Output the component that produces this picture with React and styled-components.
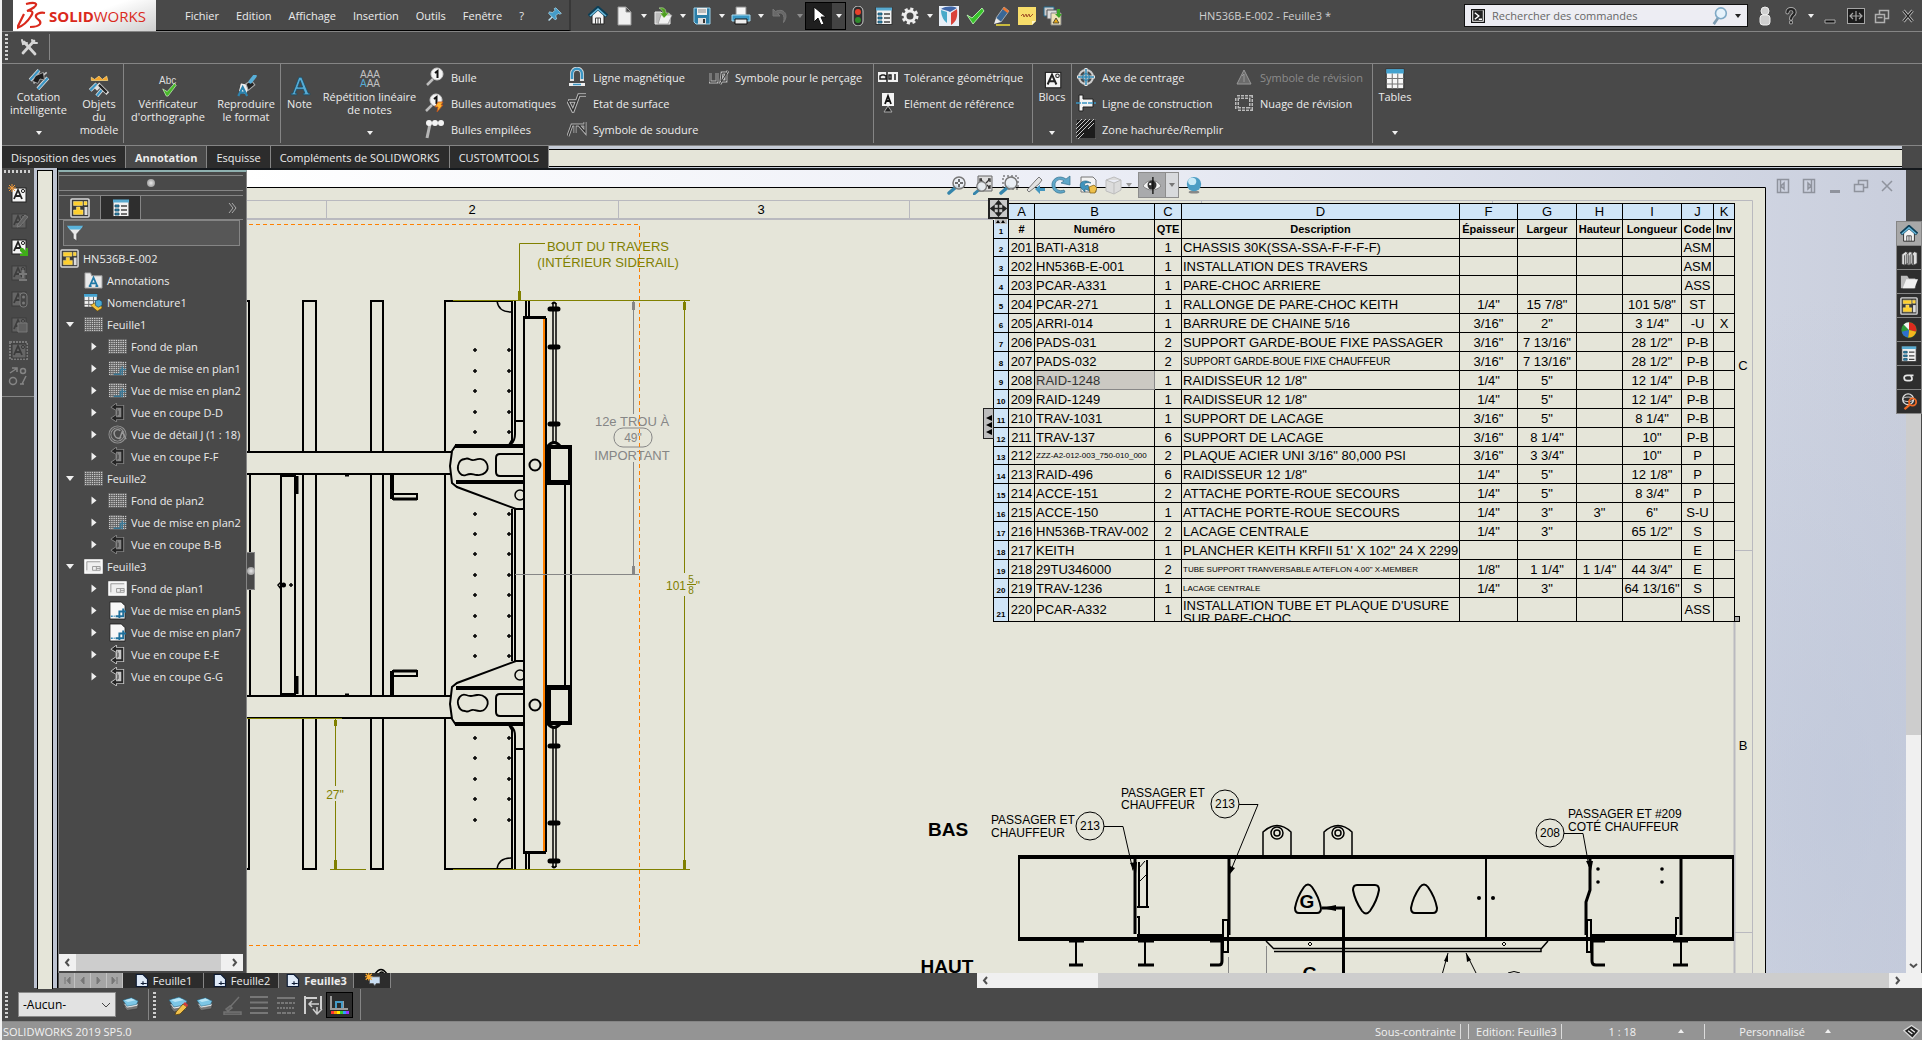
import React from 'react'
import styled, { createGlobalStyle } from 'styled-components'

const GlobalStyle = createGlobalStyle`
  * { box-sizing: border-box; }
  body { margin: 0; overflow: hidden; background: #494949; }
  button, input, select { font: inherit; color: inherit; margin: 0; padding: 0; }
  button { border: 0; background: none; cursor: pointer; }
`

/* ---------- icons, all on a 20 x 20 grid ---------- */

const sheetGrid = (
  <g fill="#cfcfcf">
    {Array.from({ length: 56 }, (_, i) => (
      <rect key={i} x={1 + (i % 8) * 2.4} y={3 + Math.floor(i / 8) * 2.1} width="1.4" height="1.2" />
    ))}
  </g>
)

const house = (
  <g>
    <path d="M4 9v9h12V9l-6-6z" fill="#f4f4f4" stroke="#222" />
    <path d="M1 10l9-8 9 8" fill="none" stroke="#0d3f57" strokeWidth="4" />
    <path d="M2 10l8-7 8 7" fill="none" stroke="#69b9dc" strokeWidth="1.6" />
    <path d="M7.500 18v-6h5v6M10 12v6" fill="none" stroke="#444" />
  </g>
)

const drawingDoc = (
  <g>
    <rect x="1" y="1" width="18" height="18" rx="1" fill="#3a3a3a" stroke="#d8d8d8" strokeWidth="1.600" />
    <path d="M3.500 3.500h9v4h-9zM14 3.500h3v3.500h-3zM6.500 9h3.500v3h3v4.500H3.500V12h3z" fill="#ffd02e" stroke="#fff0a0" strokeWidth=".5" />
    <path d="M14.500 9h3v8h-3z" fill="#ddd" />
  </g>
)

const optionsList = (
  <g>
    <rect x="2" y="1.500" width="16" height="17" fill="#f2f2f2" stroke="#333" />
    <path d="M2 1.500h16v3H2z" fill="#58aad0" />
    <path d="M4 7h4v2H4zM4 11h4v2H4zM4 15h4v2H4z" fill="#2b89b5" stroke="#174a63" strokeWidth=".8" />
    <path d="M10 8h6M10 12h6M10 16h6" stroke="#444" strokeWidth="1.300" />
  </g>
)

const greyView = (
  <g>
    <path d="M2 2h12l4 4v12H2z" fill="#606060" />
    {sheetGrid}
    <path d="M6 16h7v-5h6M15 8v9" stroke="#3b7896" strokeWidth="1.500" fill="none" />
  </g>
)

const whiteView = (
  <g>
    <path d="M2 1h12l4 4v14H2z" fill="#f7f7f7" stroke="#222" />
    <path d="M3 16h4" stroke="#3389b7" strokeWidth="1.500" strokeDasharray="2 1" />
    <path d="M8 16h8v-8M12 18v-7h7" stroke="#1e6f9b" strokeWidth="2" fill="none" />
  </g>
)

const section = (light) => (
  <g fill="none">
    <path d="M8 4h7v12H8M10 8h5M10 12h5M10 8v4" stroke={light} strokeWidth="4" />
    <path d="M9 0L3 4.500 9 8zM9 12l-6 4 6 4z" fill="#222" stroke={light} />
    <path d="M7 4h8v12H7" stroke="#262626" strokeWidth="2" />
    <path d="M10.500 8v4.500" stroke="#262626" />
  </g>
)

const layers = (
  <g stroke="#205b77" strokeWidth=".6">
    <path d="M2 12l4 5 12-2 1-3z" fill="#777" stroke="#333" />
    <path d="M2 9l4 5 12-2 1-3z" fill="#eee" stroke="#555" />
    <path d="M1 5l10-3 8 4-2 4-11 2z" fill="#7cc6e6" />
    <path d="M3 5l8-2 5 2-9 2z" fill="#b9e5f6" stroke="none" />
  </g>
)

const blockA = (bg, fg) => (
  <g>
    <rect x="4" y="4" width="14" height="14" fill={bg} stroke={fg} />
    <path d="M6 15l4-9 4 9M7.500 12h5" fill="none" stroke={fg} strokeWidth="1.800" />
    <circle cx="15" cy="7" r="1.600" fill="none" stroke={fg} />
  </g>
)

const lens = (
  <g>
    <path d="M9 12l-7 6" stroke="#3585ab" strokeWidth="3.500" strokeLinecap="round" />
    <circle cx="12" cy="8" r="6" fill="#e9eef3" fillOpacity=".8" stroke="#777" strokeWidth="1.500" />
  </g>
)

const glyphs = {
  wrench: (
    <g stroke="#d5d5d5" strokeWidth="2.800" strokeLinecap="round" fill="none">
      <path d="M5 5l11 12M15 4L4 16" />
      <path d="M3 3l1 4 4-1M13 3l1 3 4 0" strokeWidth="2" />
    </g>
  ),
  pin: (
    <g fill="#459cc8" stroke="#b9dff0" strokeWidth=".8">
      <path d="M8 11l-6 6" strokeWidth="1.800" />
      <path d="M11 1l7 7-2 1-2-1-3 3 1 4-2 1-8-8 1-2 4 1 3-3-1-2z" />
    </g>
  ),
  home: house,
  doc: <path d="M4 1h8l5 5v13H4zM12 1v5h5" fill="#f0f0f0" stroke="#999" />,
  open: (
    <g>
      <path d="M2 6h6l2 2h7v10H2z" fill="#bdbdbd" stroke="#eee" />
      <path d="M5 18L8 9h11l-4 9z" fill="#f1f1f1" stroke="#888" strokeWidth=".6" />
      <path d="M6 2c5-1 7 1 7 5h3l-5 5-4-5h3c0-2-1-3-4-5z" fill="#4f9f22" stroke="#d7f2bb" strokeWidth=".5" />
    </g>
  ),
  save: (
    <g>
      <path d="M2 2h16v16H4l-2-2z" fill="#2b7ea8" stroke="#9bd0e8" />
      <path d="M5 2h10v7H5z" fill="#efefef" />
      <path d="M6 4h8M6 6h8" stroke="#888" />
      <path d="M6 12h8v6H6z" fill="#ddd" />
      <path d="M11 13h2v4h-2z" fill="#333" />
    </g>
  ),
  print: (
    <g>
      <path d="M5 1h10v8H5z" fill="#f6f6f6" stroke="#888" />
      <path d="M1 9h18v6H1z" fill="#3a98c5" stroke="#a6d8ed" />
      <path d="M4 13h12v5H4z" fill="#eee" stroke="#111" />
    </g>
  ),
  undo: <path d="M3 3v7h7L7.500 7.500c4-2 8 1 6 9 6-8 0-15-8-11z" fill="#686868" stroke="#777" />,
  cursor: <path d="M5 1v15l4-4 3 7 3-1-3-7h5z" fill="#fff" stroke="#111" />,
  traffic: (
    <g>
      <rect x="5" y="0" width="10" height="20" rx="5" fill="#2c2c2c" stroke="#c9c9c9" />
      <circle cx="10" cy="6" r="3" fill="#e8402a" />
      <circle cx="10" cy="14" r="3" fill="#2f8a2c" />
    </g>
  ),
  options: optionsList,
  gear: (
    <g>
      <circle cx="10" cy="10" r="7" fill="none" stroke="#ededed" strokeWidth="3" strokeDasharray="3 2.500" />
      <circle cx="10" cy="10" r="5" fill="none" stroke="#ededed" strokeWidth="3" />
    </g>
  ),
  shield: (
    <g>
      <path d="M0 0h20v20H0z" fill="#e8eef6" />
      <path d="M2 4l6 2v11C4 14 2 9 2 4z" fill="#49a9c9" />
      <path d="M18 3l-6 4v12c5-3 7-8 6-16z" fill="#d9433b" />
      <path d="M2 3c5-3 11-3 16-1l-7 4-2-1z" fill="#3f66a8" />
    </g>
  ),
  check: <path d="M2 9l5 3L17 2l2 3L8 18z" fill="#39c32b" stroke="#c8ffc0" strokeWidth=".8" />,
  pencil: (
    <g>
      <path d="M13 1l5 4-8 11-5-4z" fill="#3a6796" stroke="#ddd" strokeWidth=".6" />
      <path d="M13 1l5 4-1.500 2-5-4z" fill="#f07830" />
      <path d="M5 12l5 4-7 2z" fill="#ececec" />
      <path d="M5 19h14" stroke="#f5e13b" strokeWidth="1.500" />
    </g>
  ),
  note: (
    <g>
      <path d="M1 1h18v14l-4 4H1z" fill="#f7dd6a" />
      <path d="M19 15h-4v4z" fill="#fff7c8" />
      <path d="M4 10l2-2 1 3 2-3 1 3 2-3 1 3 3-3" fill="none" stroke="#a3542a" />
    </g>
  ),
  tasks: (
    <g>
      <path d="M1 1h10v9H1z" fill="#ccc" stroke="#246b8f" />
      <path d="M4 4h10v9H4z" fill="#ddd" stroke="#555" />
      <path d="M8 7h10v12H8z" fill="#efe3b8" stroke="#888" />
      <path d="M10 17l3-5 3 5z" fill="#e6a817" stroke="#333" strokeWidth=".8" />
      <path d="M14 3h3v5h2l-3 4-4-4h2z" fill="#3da42a" />
    </g>
  ),
  user: (
    <g fill="#cfcfcf" stroke="#eee">
      <rect x="6" y="1" width="8" height="8" rx="4" />
      <rect x="5" y="9" width="10" height="10" rx="3" />
    </g>
  ),
  help: (
    <g fill="none" strokeLinecap="round">
      <path d="M6 6c0-5 8-5 8 0 0 3-4 3-4 7M10 17v.2" stroke="#aaa" strokeWidth="4.500" />
      <path d="M6 6c0-5 8-5 8 0 0 3-4 3-4 7M10 17v.2" stroke="#222" strokeWidth="2.500" />
    </g>
  ),
  minimize: <path d="M5 14h10v3H5z" fill="#111" stroke="#aaa" />,
  span: (
    <g fill="none" stroke="#a5a5a5">
      <rect x="1.500" y="2.500" width="17" height="15" fill="#1b1b1b" />
      <path d="M10 5v10M4 10h12M7 7l-3 3 3 3M13 7l3 3-3 3" strokeWidth="1.200" />
    </g>
  ),
  restore: (
    <g fill="none" stroke="#b0b0b0" strokeWidth="1.500">
      <path d="M3.500 8.500h9v8h-9zM7.500 8V4.500h9v8H13" />
      <path d="M5.500 11.500h5" />
    </g>
  ),
  close: (
    <g fill="none">
      <path d="M5 4l10 12M15 4L5 16" stroke="#b5b5b5" strokeWidth="3.500" />
      <path d="M5 4l10 12M15 4L5 16" stroke="#1d1d1d" strokeWidth="1.500" />
    </g>
  ),
  dimension: (
    <g>
      <path d="M2 11l8-9M9 19l9-10" stroke="#ddd" strokeWidth="3.500" />
      <path d="M2 11l8-9M9 19l9-10" stroke="#3a95c4" strokeWidth="2" />
      <path d="M5 14l12-10" stroke="#c9c9c9" strokeWidth="1.500" />
      <path d="M7 7l7-3 1 7-4-1-2 4-5-2z" fill="#1c1c1c" stroke="#aaa" strokeWidth=".8" />
    </g>
  ),
  modelItems: (
    <g>
      <path d="M2 14l6-6M8 19l5-6" stroke="#ddd" strokeWidth="3.500" />
      <path d="M2 14l6-6M8 19l5-6" stroke="#3a95c4" strokeWidth="2" />
      <path d="M3 2l3 2 4-3 3 3 4-3 1 4H3z" fill="#f6a52a" stroke="#ffe493" strokeWidth=".6" />
      <path d="M9 8l9 9M7 13l4-4" stroke="#ddd" strokeWidth="3.500" />
      <path d="M10 9l7 7" stroke="#222" strokeWidth="2" />
    </g>
  ),
  bigA: <path d="M2 18h5v-1.500H5.600L7 13h6l1.400 3.500H13V18h6v-1.500h-1.500L11.500 2H9L3.500 16.500H2zM8 11l2.200-6 2.200 6z" fill="#56acd6" stroke="#174c66" strokeWidth=".7" />,
  spelling: <path d="M3 11l5 3 8-9 2 2-9 12h-2z" fill="#49b92b" stroke="#dcffd0" strokeWidth=".7" />,
  format: (
    <g>
      <path d="M5 7l10 2-5 9-7-3z" fill="#eee" stroke="#444" />
      <path d="M10 8l5-3 3 4-6 5z" fill="#222" stroke="#aaa" />
      <path d="M14 6l4-5" stroke="#58b0d9" strokeWidth="3.500" strokeLinecap="round" />
      <path d="M3 19l4-8 4 8M5 16h4" fill="none" stroke="#2c83ae" strokeWidth="2" />
    </g>
  ),
  balloon: (
    <g>
      <circle cx="12" cy="7" r="6" fill="#f4f4f4" stroke="#ccc" />
      <path d="M10 6l2.500-2v7" fill="none" stroke="#111" strokeWidth="2" />
      <path d="M8 12l-6 6" stroke="#bdbdbd" strokeWidth="2.500" />
    </g>
  ),
  autoBalloon: (
    <g>
      <circle cx="11" cy="7" r="6" fill="#f4f4f4" stroke="#ccc" />
      <path d="M9 6l2.500-2v7" fill="none" stroke="#111" strokeWidth="2" />
      <path d="M7 12l-6 6" stroke="#bdbdbd" strokeWidth="2.500" />
      <path d="M13 9h5l-2 3h2l-6 7 1-5h-3z" fill="#ffb52e" stroke="#c3511b" strokeWidth=".8" />
    </g>
  ),
  stacked: (
    <g>
      <path d="M5 5L2 19" stroke="#b5b5b5" strokeWidth="3" />
      <g fill="#f4f4f4"><circle cx="4" cy="4" r="3" /><circle cx="10" cy="4" r="3" /><circle cx="16" cy="4" r="3" /></g>
    </g>
  ),
  magnet: (
    <g fill="none">
      <path d="M5 14V7c0-7 10-7 10 0v7" stroke="#dedede" strokeWidth="4" />
      <path d="M5 12V7c0-7 10-7 10 0v5" stroke="#3a95c4" strokeWidth="2.500" />
      <path d="M2 17.500h16" stroke="#eee" strokeWidth="3" />
      <path d="M6 17.500h8" stroke="#3a95c4" strokeWidth="1.500" />
    </g>
  ),
  surface: (
    <g fill="none">
      <path d="M1 8h9M1 8l5 10L12 2h7" stroke="#b9b9b9" strokeWidth="3.500" />
      <path d="M2 8h7M1 8l5 10L12 2h7" stroke="#303030" strokeWidth="1.500" />
    </g>
  ),
  weld: (
    <g fill="none">
      <path d="M1 17L5 6h13M8 6v8M12 6l6 7V3" stroke="#b9b9b9" strokeWidth="3" />
      <path d="M1 17L5 6h13M8 6v8M12 6l6 7V3" stroke="#2d2d2d" strokeWidth="1.200" />
    </g>
  ),
  hole: (
    <g fill="none">
      <path d="M1 6v9h7V6M13 6h4v8h-5zM11 17l8-13" stroke="#bbb" strokeWidth="2.800" />
      <path d="M1 6v9h7V6M13 6h4v8h-5zM11 17l8-13" stroke="#333" />
    </g>
  ),
  tolerance: (
    <g>
      <path d="M0 5h20v10H0z" fill="#f1f1f1" />
      <path d="M9 5v10M2 12v-3l2-1h2l2 1v3zM11 8h2v4h-2zM17 7v6" stroke="#222" fill="none" strokeWidth="1.500" />
    </g>
  ),
  datum: (
    <g>
      <rect x="4" y="0" width="12" height="13" fill="#f4f4f4" />
      <path d="M7 11l3-8 3 8M8 8h4" fill="none" stroke="#111" strokeWidth="1.800" />
      <path d="M10 13l4 6H6z" fill="#222" stroke="#aaa" />
    </g>
  ),
  block: blockA('#f4f4f4', '#222'),
  blockDim: <g opacity=".5">{blockA('#7a7a7a', '#333')}</g>,
  blockFrame: <g opacity=".6"><rect x="2" y="2" width="17" height="17" fill="none" stroke="#999" strokeWidth="2" strokeDasharray="2 1" />{blockA('#7a7a7a', '#333')}</g>,
  blockTraffic: (
    <g opacity=".6">
      {blockA('#7a7a7a', '#333')}
      <rect x="12" y="5" width="7" height="14" rx="3" fill="#444" stroke="#999" />
      <circle cx="15.500" cy="9" r="1.500" fill="#999" /><circle cx="15.500" cy="15" r="1.500" fill="#999" />
    </g>
  ),
  blockNew: <g>{blockA('#f4f4f4', '#222')}<path d="M4 0v8M0 4h8M1 1l6 6M7 1L1 7" stroke="#f19b3c" /></g>,
  blockInsert: <g>{blockA('#f4f4f4', '#222')}<path d="M12 12l3 0 3 3v-3h2v8h-8v-2h3l-3-3z" fill="#3fae18" /></g>,
  blockEdit: <g opacity=".5">{blockA('#7a7a7a', '#333')}<path d="M10 14l7-9 3 2-8 9-3 1z" fill="#777" stroke="#aaa" /></g>,
  blockAdd: <g opacity=".5">{blockA('#7a7a7a', '#333')}<path d="M11 12h8M15 8v8M11 18h8" stroke="#aaa" strokeWidth="2" /></g>,
  blockSave: <g opacity=".5">{blockA('#7a7a7a', '#333')}<path d="M10 9h9v9h-9z" fill="#777" stroke="#aaa" /></g>,
  belt: (
    <g fill="none" stroke="#858585" strokeWidth="1.500">
      <circle cx="5" cy="15" r="3.500" /><circle cx="15" cy="5" r="2.500" />
      <path d="M2 7l6-4M4 2h5v4M18 10l-4 8M12 18h4" />
    </g>
  ),
  centerMark: (
    <g fill="none">
      <circle cx="10" cy="10" r="7" stroke="#ccc" strokeWidth="2" />
      <path d="M10 1v18M1 10h18" stroke="#e5e5e5" strokeWidth="3" />
      <path d="M10 2v16M2 10h16" stroke="#2c86b3" strokeWidth="1.500" />
      <circle cx="10" cy="10" r="3.500" stroke="#2c86b3" />
    </g>
  ),
  centerLine: (
    <g>
      <path d="M3 2h4v4h10v8H7v4H3z" fill="#f2f2f2" stroke="#222" />
      <path d="M0 10h20" stroke="#3a95c4" strokeWidth="1.500" strokeDasharray="5 1" />
    </g>
  ),
  hatch: (
    <g>
      <path d="M0 0h20v20H0z" fill="#1c1c1c" stroke="#777" />
      <path d="M0 18L18 0M0 14L14 0M0 10L10 0M0 6l6-6M2 20l6-6M12 10l6-6" stroke="#c8c8c8" />
    </g>
  ),
  revSymbol: <path d="M10 3l7 14H3zM10 7v8M8 9l2-2" fill="#6b6b6b" stroke="#999" />,
  revCloud: (
    <g fill="none">
      <rect x="3" y="4" width="14" height="12" stroke="#bbb" strokeWidth="4" strokeDasharray="3 1" />
      <rect x="3" y="4" width="14" height="12" stroke="#444" />
    </g>
  ),
  table: (
    <g>
      <path d="M2 1h16v18H2z" fill="#f7f7f7" stroke="#333" />
      <path d="M2 1h16v4H2z" fill="#43a2cf" />
      <path d="M2 9.500h16M2 14.500h16M7.500 5v14M12.500 5v14" stroke="#777" />
    </g>
  ),
  drawing: drawingDoc,
  annotations: (
    <g>
      <path d="M1 2h6l1 3h11v13H1z" fill="#e9e9e9" stroke="#999" />
      <path d="M6 16l4-9 4 9M7.500 13h5M5 16h3M12 16h3" fill="none" stroke="#2078a5" strokeWidth="1.800" />
    </g>
  ),
  bom: (
    <g>
      <path d="M0 1h14v14H0z" fill="#f2f2f2" stroke="#333" />
      <path d="M0 1h14v3H0z" fill="#43a2cf" />
      <path d="M0 8h14M0 12h14M5 4v11M10 4v11" stroke="#666" />
      <path d="M7 13l5-3 2 2 4-1 1 5-5 3z" fill="#f4c33a" stroke="#6b4d06" strokeWidth=".7" />
      <path d="M12 8l4-1 3 2v4l-4 2-3-2z" fill="#4ba9d4" stroke="#174a63" strokeWidth=".7" />
    </g>
  ),
  sheetDim: <g><path d="M0 2h20v16H0z" fill="#5c5c5c" />{sheetGrid}</g>,
  sheet: (
    <g>
      <path d="M1 3h18v14H1z" fill="#efefef" stroke="#fff" strokeWidth="1.500" />
      <path d="M3 14V5h14M9 14v-4h8v4H9M13 10v4M13 12h4" stroke="#999" fill="none" />
    </g>
  ),
  viewDim: greyView,
  view: whiteView,
  sectionDim: section('#858585'),
  section: section('#c5c5c5'),
  detail: (
    <g fill="none">
      <circle cx="10" cy="10" r="8" stroke="#909090" strokeWidth="3" />
      <circle cx="10" cy="10" r="8" stroke="#444" />
      <path d="M13 6c-4-3-8 1-6 5s5 3 7 2M12 15l3-8 4 8" stroke="#999" strokeWidth="1.500" />
    </g>
  ),
  funnel: (
    <g>
      <path d="M1 3h18l-7 8v8l-4-3v-5z" fill="#e9e9e9" stroke="#444" strokeWidth=".8" />
      <path d="M1 2h18l-3 4H4z" fill="#5ab3dc" />
    </g>
  ),
  library: (
    <g fill="#dedede" stroke="#333" strokeWidth=".8">
      <path d="M2 6l4-3 3 1v12l-4 2-3-1zM7 6l4-3 3 1v12l-4 2-3-1zM12 6l4-3 3 1v12l-4 2-3-1z" />
      <path d="M5 7v11M10 7v11M15 7v11" />
    </g>
  ),
  folder: (
    <g>
      <path d="M1 3h7l2 3h7v11H1z" fill="#bbb" />
      <path d="M3 17L7 7h13l-4 10z" fill="#f1f1f1" />
    </g>
  ),
  ball: (
    <g>
      <circle cx="10" cy="10" r="8.500" fill="#2f9a3a" />
      <path d="M10 10L4 4a8.500 8.500 0 0 1 6-2.500z" fill="#f2f2f2" />
      <path d="M10 10V1.500A8.500 8.500 0 0 1 18 12z" fill="#dd2a1e" />
      <path d="M10 10l8 2a8.500 8.500 0 0 1-9 6.400z" fill="#f4b51d" />
      <path d="M10 10L9 18.400A8.500 8.500 0 0 1 2 12z" fill="#2f6fd0" />
    </g>
  ),
  forum: <path d="M15 7H8c-5 0-4 6 0 6h3c3 0 3-3 1-5" fill="none" stroke="#e5e5e5" strokeWidth="2" />,
  search3d: (
    <g fill="none">
      <circle cx="9" cy="7" r="6" stroke="#ddd" strokeWidth="1.500" />
      <ellipse cx="9" cy="7" rx="6" ry="2.500" stroke="#ddd" />
      <circle cx="14" cy="10" r="4" stroke="#ef6a25" strokeWidth="2" />
      <path d="M11 13l-6 5" stroke="#ef6a25" strokeWidth="2.500" />
    </g>
  ),
  zoomFit: <g>{lens}<path d="M12 4v8M8 8h8" stroke="#444" strokeDasharray="3 2" strokeWidth="1.500" /></g>,
  zoomSheet: (
    <g>
      <path d="M5 1h14v15H5z" fill="#ddd" stroke="#666" />
      <path d="M9 4H7v3M15 4h2v3M17 10v3h-2M8 5l3 3M16 5l-3 3M17 13l-3-3" stroke="#333" fill="none" strokeWidth="1.300" />
      <g transform="translate(-1 5) scale(.8)">{lens}</g>
    </g>
  ),
  zoomArea: <g><path d="M4 1h15v13H4z" fill="none" stroke="#444" strokeDasharray="2 2" />{lens}</g>,
  previous: (
    <g>
      <path d="M2 15l9-10 3-3 3 3-3 4-10 8z" fill="#e2e2e2" stroke="#777" />
      <path d="M10 14l5-4v3h5v3h-5v3z" fill="#4497bf" />
    </g>
  ),
  rotate: <path d="M15 4C8-1 0 4 1 11c1 6 7 9 13 6l-1-2c-5 2-9-1-9-5 0-5 5-7 9-4l-3 2 9 2V1z" fill="#5fa7c9" stroke="#39738e" strokeWidth=".7" />,
  rotate3d: (
    <g>
      <path d="M4 2h12l3 3v12H4z" fill="#f3f3f3" stroke="#777" />
      <path d="M14 8c-7-5-13 0-10 5l4 4v-3l5 2-2-6-3 1c-2-3 2-4 6-3z" fill="#3f93bd" stroke="#1f5c7a" strokeWidth=".6" />
      <path d="M12 12l5-2 3 3-2 5-5 0z" fill="#eec04a" stroke="#7c5a10" strokeWidth=".7" />
    </g>
  ),
  cube: <path d="M3 5l8-3 7 3v10l-7 4-8-3zM3 5l8 3 7-3M11 8v11" fill="#dcdcdc" stroke="#bdbdbd" />,
  eye: (
    <g>
      <path d="M0 11C5 3 15 3 20 11 15 17 5 17 0 11z" fill="#f2f2f2" stroke="#777" />
      <circle cx="10" cy="10" r="5" fill="#333" />
      <path d="M11 1v19" stroke="#111" strokeWidth="1.500" />
      <circle cx="8" cy="9" r="1.300" fill="#fff" />
    </g>
  ),
  sphere: (
    <g>
      <ellipse cx="10" cy="18" rx="6" ry="1.500" fill="#888" />
      <circle cx="10" cy="9" r="8" fill="#4c9dc4" />
      <ellipse cx="8" cy="6" rx="4.500" ry="4" fill="#c9eaf7" />
    </g>
  ),
  layers,
  layerEdit: <g>{layers}<path d="M8 17l7-8 4 3-7 7-5 1z" fill="#f2c14b" stroke="#5b420e" strokeWidth=".8" /><path d="M15 9l2-2 3 3-1 2z" fill="#d23a3a" /></g>,
  brush: <g opacity=".5" stroke="#999" fill="#777"><path d="M8 12l9-10M4 14l4-3 2 2-4 3zM2 17h17v3H2z" strokeWidth="1.500" /></g>,
  lineWidth: <path d="M1 2h18M1 7.500h18M1 13h18M1 18h18" stroke="#777" strokeWidth="2" />,
  lineStyle: <g stroke="#777" strokeWidth="2"><path d="M1 3h18" /><path d="M1 8h18" strokeDasharray="3 1" /><path d="M1 13h18" strokeDasharray="2 1" /><path d="M1 18h18" strokeDasharray="4 1" /></g>,
  hideShow: (
    <g fill="none" stroke="#cfcfcf" strokeWidth="2">
      <path d="M2 1v18M18 1v13M2 3h12" />
      <path d="M6 9h10M9 6L6 9l3 3M10 14l4 5 5-5M14 18v-6" strokeWidth="1.500" />
    </g>
  ),
  colorMode: (
    <g>
      <path d="M1 1v13h17M6 14V7h7v7" fill="none" stroke="#9b9b9b" strokeWidth="2" />
      <path d="M6 13V7h6v6" fill="none" stroke="#459cc8" strokeWidth="2" />
      <path d="M1 16h3v3H1z" fill="#f33" /><path d="M4 16h3v3H4z" fill="#f90" /><path d="M7 16h3v3H7z" fill="#fe0" />
      <path d="M10 16h3v3h-3z" fill="#3c3" /><path d="M13 16h3v3h-3z" fill="#39f" /><path d="M16 16h3v3h-3z" fill="#93f" />
    </g>
  ),
  page: (
    <g>
      <path d="M3 2h9l6 6v10H3z" fill="#dfeaf8" stroke="#0c1a33" strokeWidth="1.500" />
      <path d="M9 14h8M12 11v5" stroke="#0c1a33" strokeWidth="1.500" />
    </g>
  ),
  newPage: (
    <g>
      <path d="M6 5h14v9h-5l-2 3-2-3H6z" fill="#c8ddf2" stroke="#555" />
      <path d="M5 0v10M0 5h10M1 1l8 8M9 1L1 9" stroke="#ffad2f" strokeWidth="1.500" />
    </g>
  ),
  tag: (
    <g>
      <path d="M1 9l9-6 9 6-8 9z" fill="#222" stroke="#d8d8d8" strokeWidth="1.500" />
      <path d="M6 9l5 4M9 7l5 4" stroke="#eee" strokeWidth="1.500" />
    </g>
  ),
  magnifier: (
    <g>
      <path d="M8 12l-5 7" stroke="#7e9db2" strokeWidth="3" />
      <circle cx="11" cy="7" r="6" fill="#e6f2fb" stroke="#7fa9c6" strokeWidth="1.800" />
    </g>
  ),
  prompt: (
    <g>
      <path d="M2 2h16v16H2z" fill="#fff" stroke="#111" strokeWidth="1.500" />
      <path d="M4 3h12v13H4z" fill="#222" />
      <path d="M6 6l5 4-5 4M11 14h4" stroke="#fff" strokeWidth="1.800" fill="none" />
    </g>
  ),
  mdiLeft: <path d="M4.500 3.500h11v13h-11zM11 7l-3 3 3 3zM7.500 4v12" fill="none" stroke="#8f939d" strokeWidth="1.500" />,
  mdiRight: <path d="M4.500 3.500h11v13h-11zM9 7l3 3-3 3zM12.500 4v12" fill="none" stroke="#8f939d" strokeWidth="1.500" />,
  mdiMin: <path d="M5 14h10v3H5z" fill="#8f939d" />,
  mdiRestore: <path d="M3.500 8.500h9v7h-9zM7.500 8V4.500h9v7H13" fill="none" stroke="#8f939d" strokeWidth="1.500" />,
  mdiClose: <path d="M5 5l10 10M15 5L5 15" fill="none" stroke="#8f939d" strokeWidth="1.500" />,
}

const Icon = ({ name, size = 20 }) => (
  <svg width={size} height={size} viewBox="0 0 20 20" aria-hidden="true">{glyphs[name]}</svg>
)

/* ---------- shared parts ---------- */

const Page = styled.div`
  display: flex;
  flex-direction: column;
  height: 100vh;
  border-left: 2px solid #f2f2f2;
  background: #494949;
  color: #ececec;
  font: 11px/13px "Open Sans", "Noto Sans", sans-serif;
`

const Caret = styled.span`
  display: inline-block;
  border: 3px solid transparent;
  border-${p => (p.$up ? 'bottom' : 'top')}: 4px solid ${p => p.$color || '#f0f0f0'};
  border-${p => (p.$up ? 'top' : 'bottom')}: 0;
`

const Grip = styled.div`
  flex: none;
  ${p => (p.$wide ? 'width: 28px; height: 3px;' : 'width: 3px;')}
  background: repeating-linear-gradient(${p => (p.$wide ? '90deg' : '180deg')}, #cfcfcf 0 2px, transparent 2px 4px);
`

const IconButton = styled.button`
  display: flex;
  align-items: center;
  justify-content: center;
  width: ${p => p.$w || 26}px;
  height: ${p => p.$h || 26}px;
`

/* ---------- title bar ---------- */

const TitleBar = styled.header`
  display: flex;
  flex: none;
  height: 32px;
  padding-left: 11px;
  border-bottom: 1px solid #858585;
`

const Logo = styled.div`
  display: flex;
  align-items: center;
  width: 143px;
  padding-left: 4px;
  gap: 3px;
  background: linear-gradient(160deg, #fff 50%, #cfcfcf);
  color: #da291c;
  font: 15px/20px "Open Sans", sans-serif;
`

const MenuBar = styled.nav`
  display: flex;
  align-items: center;
  gap: 17px;
  width: 415px;
  padding-left: 29px;
  border-right: 2px solid #383838;
  border-bottom: 1px solid #000;
  a { color: inherit; text-decoration: none; }
`

const QuickBar = styled.div`
  display: flex;
  align-items: center;
  padding-left: 14px;
`

const ToolPair = styled.div`
  display: flex;
  height: 26px;
  ${p => p.$active && 'background: #1f1f1f; outline: 1px solid #000; button + button { background: #434343; }'}
`

const DocTitle = styled.h1`
  flex: 1;
  margin: 0;
  text-align: center;
  align-self: center;
  color: #cfcfcf;
  font-size: 11px;
  font-weight: 400;
`

const SearchBox = styled.label`
  display: flex;
  align-items: center;
  align-self: center;
  width: 284px;
  height: 23px;
  padding: 0 6px 0 5px;
  gap: 6px;
  border: 1px solid #111;
  background: #ededf3;
  input {
    flex: 1;
    min-width: 0;
    border: 0;
    outline: 0;
    background: none;
    color: #555;
    &::placeholder { color: #666; opacity: 1; }
  }
`

const WindowButtons = styled.div`
  display: flex;
  align-items: center;
  padding: 0 1px 0 4px;
`

const SecondBar = styled.div`
  display: flex;
  flex: none;
  height: 32px;
  padding: 2px 3px 3px;
  border-bottom: 1px solid #858585;
`

const ToolsButton = styled(IconButton)`
  width: 42px;
  height: 100%;
  border-right: 1px solid #858585;
`

/* ---------- ribbon ---------- */

const Ribbon = styled.section`
  display: flex;
  flex: none;
  height: 82px;
  padding: 0 0 2px;
  border-bottom: 1px solid #858585;
`

const Group = styled.div`
  display: flex;
  border-right: 1px solid #858585;
`

const BigButton = styled.button`
  display: flex;
  flex-direction: column;
  align-items: center;
  width: ${p => p.$w}px;
  padding-top: ${p => (p.$low ? 11 : 4)}px;
  span { max-width: 96px; }
  ${Caret} { margin-top: auto; margin-bottom: 8px; }
`

const Column = styled.div`
  display: flex;
  flex-direction: column;
  width: ${p => p.$w}px;
  padding-left: 4px;
`

const SmallButton = styled.button`
  display: flex;
  align-items: center;
  gap: 6px;
  height: 26px;
  white-space: nowrap;
  color: ${p => (p.disabled ? '#8c8c8c' : 'inherit')};
`

const TabRow = styled.div`
  display: flex;
  flex: none;
  height: 22px;
`

const Tab = styled.button`
  padding: 0 9px;
  border-right: 1px solid #858585;
  background: ${p => (p.$active ? '#494949' : '#2c2c2c')};
  font-weight: ${p => (p.$active ? 700 : 400)};
  white-space: nowrap;
`

const BackSheet = styled.div`
  flex: 1;
  margin-right: 20px;
  padding: 3px 0;
  background: #c5cbd6;
  &::before {
    content: '';
    display: block;
    height: 100%;
    border: solid #000;
    border-width: 1px 0;
    background: #e5e5d9;
  }
`

const smallColumns1 = [
  { w: 142, items: [['balloon', 'Bulle'], ['autoBalloon', 'Bulles automatiques'], ['stacked', 'Bulles empilées']] },
  { w: 142, items: [['magnet', 'Ligne magnétique'], ['surface', 'Etat de surface'], ['weld', 'Symbole de soudure']] },
  { w: 168, items: [['hole', 'Symbole pour le perçage']] },
]

const SmallColumn = ({ w, items }) => (
  <Column $w={w}>
    {items.map(([icon, label, off]) => (
      <SmallButton key={label} disabled={off}><Icon name={icon} />{label}</SmallButton>
    ))}
  </Column>
)

const IconLabel = styled.svg`
  font: 10px "Liberation Sans", sans-serif;
`

/* ---------- work area ---------- */

const WorkArea = styled.main`
  position: relative;
  display: flex;
  flex: 1;
  min-height: 0;
`

const LeftTools = styled.aside`
  display: flex;
  flex-direction: column;
  align-items: center;
  width: 32px;
  padding-top: 2px;
  ${Grip} { margin-bottom: 8px; }
`

const Rule = styled.hr`
  width: 100%;
  margin: 7px 0 0;
  border: 0;
  border-top: 1px solid #858585;
`

const FrameStrip = styled.div`
  width: 24px;
  padding: 2px 4px 0 3px;
  background: #bdc3d1;
  border-right: 1px solid #000;
  &::before {
    content: '';
    display: block;
    height: 100%;
    border: 1px solid #000;
    border-bottom: 0;
    background: #e5e5d9;
  }
`

const DocColumn = styled.div`
  display: flex;
  flex: 1;
  flex-direction: column;
  min-width: 0;
  border-top: 2px solid #15191d;
`

const DocRow = styled.div`
  display: flex;
  flex: ${p => (p.$grow ? '1' : 'none')};
  min-height: 0;
`

const TreePanel = styled.aside`
  display: flex;
  flex-direction: column;
  flex: none;
  width: 189px;
  padding: 0 3px 2px 0;
  border-top: 2px solid #8fb1b0;
  border-left: 1px solid #858585;
  border-right: 1px solid #858585;
  background: #494949;
`

const PanelHandle = styled.div`
  height: 16px;
  margin-top: 3px;
  border: solid #858585;
  border-width: 1px 0;
  display: grid;
  place-items: center;
`

const Knob = styled.span`
  width: 8px;
  height: 8px;
  border-radius: 50%;
  background: radial-gradient(#e8e8e8, #858585);
`

const PanelTabs = styled.div`
  display: flex;
  height: 25px;
  margin-top: 4px;
  border: solid #858585;
  border-width: 1px 0;
  button:nth-child(2) { background: #2e2e2e; border: solid #858585; border-width: 0 1px; }
  button:last-child { margin-left: auto; color: #aaa; }
`

const FilterBox = styled.label`
  display: flex;
  align-items: center;
  height: 26px;
  margin: 0 3px 1px 4px;
  padding-left: 2px;
  border: 1px solid #858585;
  background: #575757;
  input { flex: 1; min-width: 0; border: 0; outline: 0; background: none; }
`

const TreeList = styled.ul`
  flex: 1;
  margin: 0;
  padding: 0;
  overflow: hidden;
  list-style: none;
`

const TreeRow = styled.li`
  display: flex;
  align-items: center;
  height: 22px;
  padding-left: ${p => (p.$depth > 1 ? 25 : 1)}px;
  gap: 4px;
  white-space: nowrap;
  svg { flex: none; }
`

const Twisty = styled.button`
  flex: none;
  width: 20px;
  display: grid;
  place-items: center;
  ${Caret} { border-width: 4px; border-top-width: 5px; border-bottom-width: 0; ${p => (p.$closed ? 'transform: rotate(-90deg);' : '')} }
`

const HScroll = styled.div`
  display: flex;
  align-items: center;
  flex: ${p => (p.$fill ? '1' : 'none')};
  height: ${p => (p.$fill ? 15 : 17)}px;
  background: #f0f0f0;
  color: #505050;
  button { width: 17px; height: 15px; display: grid; place-items: center; }
`

const Corner = styled.div`
  width: 16px;
  height: 15px;
  background: #f0f0f0;
`

const Thumb = styled.div`
  flex: 1;
  height: 100%;
  margin: ${p => p.$m || 0};
  background: #cdcdcd;
`

const Arrow = ({ d }) => (
  <svg width="9" height="9" viewBox="0 0 9 9" aria-hidden="true">
    <path d={d} fill="none" stroke="#505050" strokeWidth="2" />
  </svg>
)

const VScroll = styled.div`
  display: flex;
  flex-direction: column;
  align-items: center;
  width: 16px;
  border-right: 1px solid #494949;
  background: linear-gradient(#494949 0 52px, #cdcdcd 52px 565px, #f0f0f0 565px);
  button { margin-top: auto; width: 15px; height: 15px; }
`

const Viewport = styled.div`
  position: relative;
  flex: 1;
  min-width: 0;
  overflow: hidden;
  background:
    radial-gradient(ellipse 300px 500px at 96% 78%, rgba(188, 197, 217, .6), transparent),
    linear-gradient(90deg, #fff, #eceef6 50%, #d3d8e5 85%, #c9cedc);
  color: #000;
`

const Scene = styled.svg`
  position: absolute;
  inset: 0;
  width: 100%;
  height: 100%;
  font: 13px "Liberation Sans", Arial, sans-serif;
`

const ViewTools = styled.div`
  position: absolute;
  top: 2px;
  left: 697px;
  display: flex;
  align-items: center;
`

const EyePair = styled.div`
  display: flex;
  margin: 0 2px 0 6px;
  border: 1px solid #8d8d8d;
  background: #a9aaac;
  button + button { background: #d8dadd; border-left: 1px solid #8d8d8d; }
`

const MdiButtons = styled.div`
  position: absolute;
  top: 3px;
  right: 6px;
  display: flex;
`

const PanelSplit = styled.button`
  position: absolute;
  left: 0;
  top: 382px;
  width: 8px;
  height: 38px;
  display: grid;
  place-items: center;
  border: 1px solid #858585;
  border-left: 0;
  background: #494949;
`

const TaskTabs = styled.nav`
  position: absolute;
  top: 53px;
  right: 0;
  display: flex;
  flex-direction: column;
  width: 26px;
  border: 1px solid #858585;
  border-bottom: 0;
  button {
    width: 100%;
    height: 24px;
    border-bottom: 1px solid #858585;
    background: #2e2e2e;
  }
  button:first-child { background: #a8a8a8; }
`

/* ---------- parts list ---------- */

const BomWrap = styled.div`
  position: absolute;
  left: 746px;
  top: 33px;
`

const Bom = styled.table`
  width: 741px;
  table-layout: fixed;
  border-collapse: collapse;
  font: 13px/15px "Liberation Sans", Arial, sans-serif;
  th, td { padding: 0; overflow: hidden; border: 1px solid #000; text-align: center; white-space: nowrap; }
  thead th { height: 15px; background: #d0e5f7; font-weight: 400; }
  thead th:first-child { border-color: transparent #000 transparent transparent; background: none; }
  tbody tr:first-child td { font-weight: 700; font-size: 11px; }
`

const Row = styled.tr`
  height: ${p => p.$h}px;
`

const RowNo = styled.th`
  background: #d0e5f7;
  font-size: 8px;
  line-height: 12px;
  vertical-align: bottom;
`

const Cell = styled.td`
  ${p => p.$left && '&& { text-align: left; padding-left: 1px; }'}
  ${p => p.$size && `font-size: ${p.$size}px;`}
  ${p => p.$picked && '&& { background: #cbc9c3; color: #333; border-color: #888; }'}
  div { height: 22px; overflow: hidden; line-height: 13px; white-space: normal; }
`

const MoveHandle = styled.button`
  position: absolute;
  left: -5px;
  top: -5px;
  width: 21px;
  height: 21px;
  display: grid;
  place-items: center;
  border: 2px solid #222;
  background: #c9c9c9;
`

const SideHandle = styled.button`
  position: absolute;
  left: -10px;
  top: 205px;
  width: 11px;
  height: 31px;
  border: 1px solid #222;
  background: #bdbdbd;
  svg { display: block; }
`

const TopHandle = styled.button`
  position: absolute;
  left: 2px;
  top: 15px;
  width: 12px;
  height: 6px;
  background: #bdbdbd;
  svg { display: block; }
`

const SizeHandle = styled.span`
  position: absolute;
  right: -5px;
  bottom: 0;
  width: 6px;
  height: 6px;
  border: 1px solid #000;
  background: #aaa;
`

const bomRows = [
  ['201', 'BATI-A318', '1', 'CHASSIS 30K(SSA-SSA-F-F-F-F)', '', '', '', '', 'ASM', ''],
  ['202', 'HN536B-E-001', '1', 'INSTALLATION DES TRAVERS', '', '', '', '', 'ASM', ''],
  ['203', 'PCAR-A331', '1', 'PARE-CHOC ARRIERE', '', '', '', '', 'ASS', ''],
  ['204', 'PCAR-271', '1', 'RALLONGE DE PARE-CHOC KEITH', '1/4"', '15 7/8"', '', '101 5/8"', 'ST', ''],
  ['205', 'ARRI-014', '1', 'BARRURE DE CHAINE 5/16', '3/16"', '2"', '', '3 1/4"', '-U', 'X'],
  ['206', 'PADS-031', '2', 'SUPPORT GARDE-BOUE FIXE PASSAGER', '3/16"', '7 13/16"', '', '28 1/2"', 'P-B', ''],
  ['207', 'PADS-032', '2', 'SUPPORT GARDE-BOUE FIXE CHAUFFEUR', '3/16"', '7 13/16"', '', '28 1/2"', 'P-B', ''],
  ['208', 'RAID-1248', '1', 'RAIDISSEUR 12 1/8"', '1/4"', '5"', '', '12 1/4"', 'P-B', ''],
  ['209', 'RAID-1249', '1', 'RAIDISSEUR 12 1/8"', '1/4"', '5"', '', '12 1/4"', 'P-B', ''],
  ['210', 'TRAV-1031', '1', 'SUPPORT DE LACAGE', '3/16"', '5"', '', '8 1/4"', 'P-B', ''],
  ['211', 'TRAV-137', '6', 'SUPPORT DE LACAGE', '3/16"', '8 1/4"', '', '10"', 'P-B', ''],
  ['212', 'ZZZ-A2-012-003_750-010_000', '2', 'PLAQUE ACIER UNI 3/16" 80,000 PSI', '3/16"', '3 3/4"', '', '10"', 'P', ''],
  ['213', 'RAID-496', '6', 'RAIDISSEUR 12 1/8"', '1/4"', '5"', '', '12 1/8"', 'P', ''],
  ['214', 'ACCE-151', '2', 'ATTACHE PORTE-ROUE SECOURS', '1/4"', '5"', '', '8 3/4"', 'P', ''],
  ['215', 'ACCE-150', '1', 'ATTACHE PORTE-ROUE SECOURS', '1/4"', '3"', '3"', '6"', 'S-U', ''],
  ['216', 'HN536B-TRAV-002', '2', 'LACAGE CENTRALE', '1/4"', '3"', '', '65 1/2"', 'S', ''],
  ['217', 'KEITH', '1', 'PLANCHER KEITH KRFII 51\' X 102" 24 X 2299', '', '', '', '', 'E', ''],
  ['218', '29TU346000', '2', 'TUBE SUPPORT TRANVERSABLE A/TEFLON 4.00" X-MEMBER', '1/8"', '1 1/4"', '1 1/4"', '44 3/4"', 'E', ''],
  ['219', 'TRAV-1236', '1', 'LACAGE CENTRALE', '1/4"', '3"', '', '64 13/16"', 'S', ''],
  ['220', 'PCAR-A332', '1', 'INSTALLATION TUBE ET PLAQUE D\'USURE SUR PARE-CHOC', '', '', '', '', 'ASS', ''],
]

const bomWidths = [15, 26, 120, 27, 278, 58, 59, 46, 59, 32, 21]
const bomTitles = ['#', 'Numéro', 'QTE', 'Description', 'Épaisseur', 'Largeur', 'Hauteur', 'Longueur', 'Code', 'Inv']

const fitSize = (row, col) => {
  if (row === '207' && col === 3) return 10
  if (row === '212' && col === 1) return 8
  if ((row === '218' || row === '219') && col === 3) return 8
  return null
}

const PartsList = () => (
  <BomWrap>
    <Bom>
      <colgroup>{bomWidths.map((w, i) => <col key={i} width={w} />)}</colgroup>
      <thead>
        <tr>{['', ...'ABCDFGHIJK'].map(l => <th key={l}>{l}</th>)}</tr>
      </thead>
      <tbody>
        <Row $h={19}><RowNo>1</RowNo>{bomTitles.map(t => <td key={t}>{t}</td>)}</Row>
        {bomRows.map((row, r) => (
          <Row key={row[0]} $h={r === 0 || r === 11 ? 18 : r === 19 ? 24 : 19}>
            <RowNo>{r + 2}</RowNo>
            {row.map((text, c) => (
              <Cell key={c} $left={c === 1 || c === 3} $size={fitSize(row[0], c)} $picked={text === 'RAID-1248'}>
                {r === 19 && c === 3 ? <div>{text}</div> : text}
              </Cell>
            ))}
          </Row>
        ))}
      </tbody>
    </Bom>
    <TopHandle aria-label="Replier l'en-tête"><svg width="12" height="6"><path d="M1 5l2-3 2 3zM6 5l2-3 2 3z" /></svg></TopHandle>
    <MoveHandle aria-label="Déplacer la table">
      <svg width="17" height="17" viewBox="0 0 17 17"><path d="M8.500 2v13M2 8.500h13M6 4l2.500-3L11 4zM6 13l2.500 3 2.500-3zM4 6L1 8.500 4 11zM13 6l3 2.500-3 2.500z" fill="#222" stroke="#222" strokeWidth="1.500" /></svg>
    </MoveHandle>
    <SideHandle aria-label="Replier la table">
      <svg width="9" height="29"><path d="M8 6L2 9l6 3zM8 13l-6 3 6 3zM8 20l-6 3 6 3z" /></svg>
    </SideHandle>
    <SizeHandle />
  </BomWrap>
)

/* ---------- drawing ---------- */

const dotRows = [350, 371, 391, 412, 432, 514, 534, 554, 575]

// upper half of the rear view, mirrored about y = 585 for the lower half
const RearHalf = () => (
  <g fill="none" stroke="#000" strokeWidth="2">
    <path d="M247 301h2v151M303 452V301h13v151M371 452V301h12v151M445 452V301h67" />
    <path d="M247 452h204M247 474h204" />
    <path d="M250 475v110M303 475v110M316 475v110M371 475v110M383 475v110M445 475v110" />
    <path d="M281 585V476h15M295 585V476" />
    <path d="M297 476v18M345 475h4" strokeWidth="3" />
    <path d="M392 475v24" strokeWidth="4" />
    <path d="M392 499h25v-5h-23" />
    <path d="M393 499h24" strokeWidth="3" />
    {dotRows.map(y => (
      <path key={y} d={`M473 ${y}h4M475 ${y - 2}v4M507 ${y}h4M509 ${y - 2}v4`} strokeWidth="1.500" />
    ))}
    <path d="M497 301c1 7 6 11 14 11" strokeWidth="1.500" />
    <path d="M512 301v139l-3 5M515 301v133q0 7-4 10M515 421h9M526 301v16M529 301v16" />
    <path d="M512 509v76M515 509v76" />
    <path d="M553 303v141M556 303v141" strokeWidth="1.500" />
    <path d="M552 304q2-3 4 0" />
    <path d="M550 309h8M550 347h8M550 424h8" strokeWidth="5" strokeLinecap="round" />
    <path d="M548 446q6-7 12 0" strokeWidth="3" />
    <path d="M565 484v101M571 484v101" />
    <path d="M456 445l-4 6-2 15 2 17 5 4 59 22h8" fill="#e5e5d9" />
    <path d="M455 446h69M456 482h68" strokeWidth="4" />
    <path d="M465 459c4-2 5 2 9 1s10-3 13 4-4 12-10 11-6-2-11 0-9-4-8-9 3-7 7-7z" strokeWidth="1.800" />
    <path d="M524 454h-24q-4 0-4 4v14q0 4 4 4h24" />
    <circle cx="520" cy="495" r="5" strokeWidth="1.500" />
    <path d="M524 585V317h21v268" fill="#e5e5d9" />
    <path d="M524 318h22M546 318v267" strokeWidth="2" />
    <circle cx="535" cy="465" r="5.500" />
    <path d="M544 319v266" stroke="#ff8000" />
    <path d="M549 447h21v35h-21z" strokeWidth="4" fill="#e5e5d9" />
    <path d="M546 446h25v38h-25z" />
  </g>
)

const Ear = ({ x }) => (
  <g fill="none" stroke="#000" strokeWidth="1.500">
    <path d={`M${x - 14} 856v-24q14-13 28 0v24`} />
    <circle cx={x} cy="833" r="6" />
    <circle cx={x} cy="833" r="3" />
  </g>
)

const Tri = ({ x, down }) => (
  <path
    d="M-4 -12Q0 -17 4 -12Q11 -2 13 9Q13 14 9 14H-9Q-13 14 -13 9Q-11 -2 -4 -12z"
    transform={`translate(${x} 899) scale(1 ${down ? -1 : 1})`}
    fill="none" stroke="#000" strokeWidth="2"
  />
)

const Balloon = ({ x, y, text }) => (
  <g>
    <circle cx={x} cy={y} r="14" fill="none" stroke="#000" />
    <text x={x} y={y + 4} textAnchor="middle" fontSize="12">{text}</text>
  </g>
)

const FrameGrid = () => (
  <g fill="none" stroke="#b9b9bf">
    <path d="M200 200.500h1552.500v800" />
    <path d="M200 219h793M1734.500 622v400" strokeWidth="2" />
    <path d="M326.500 201v18M618.500 201v18M909.500 201v18M1201.500 201v3M1492.500 201v3M1735 550.500h17M1735 932.500h17" />
  </g>
)

const Drawing = () => (
  <Scene>
    <g transform="translate(-247 -170)">
      <path d="M200 187.500h1565.500v900H200z" fill="#e5e5d9" stroke="#000" />
      <FrameGrid />
      <g textAnchor="middle" fontSize="13">
        <text x="472" y="214">2</text>
        <text x="761" y="214">3</text>
        <text x="1743" y="370">C</text>
        <text x="1743" y="750">B</text>
      </g>

      <RearHalf />
      <g transform="translate(0 1170) scale(1 -1)"><RearHalf /></g>
      <path d="M281 582l-3 3 3 4M291 583v4M289 585h4" stroke="#000" fill="none" strokeWidth="1.500" />
      <circle cx="283.500" cy="585" r="2.500" />

      <g fill="none" stroke="#808000">
        <path d="M545 243.500h-25.500V300M453 300.500h237M330 869.500h36M453 869.500h237M247 718.500h95" />
        <path d="M684.500 301v272M684.500 596v273M335.500 719v67M335.500 801v68" />
        <path d="M519.500 291v9M684.500 302v8M684.500 860v9M335.500 720v6M335.500 860v9" strokeWidth="3" />
      </g>
      <g fill="none" stroke="#868686">
        <path d="M633.500 301v113M633.500 462v112M515 574.500h124" />
        <path d="M633.500 302v8M633.500 566v8" strokeWidth="3" />
        <rect x="614" y="428" width="38" height="19" rx="9" />
      </g>
      <g fill="#808000" textAnchor="middle">
        <text x="608" y="251">BOUT DU TRAVERS</text>
        <text x="608" y="267">(INTÉRIEUR SIDERAIL)</text>
        <text x="676" y="590" fontSize="12">101</text>
        <text x="691" y="583" fontSize="10">5</text>
        <text x="691" y="594" fontSize="10">8</text>
        <text x="698" y="590" fontSize="12">"</text>
        <text x="335" y="799" fontSize="12">27"</text>
        <path d="M687 584.500h9" stroke="#808000" />
      </g>
      <g fill="#868686" textAnchor="middle">
        <text x="632" y="426">12e TROU À</text>
        <text x="633" y="442" fontSize="12">49"</text>
        <text x="632" y="460">IMPORTANT</text>
      </g>
      <path d="M200 224.500h439.500V945.500H200" fill="none" stroke="#ff8000" strokeDasharray="4 3" />
      <path d="M375 974q6-9 12 0M379 974q3-4 5 0" fill="none" stroke="#000" strokeWidth="1.500" />

      <g fontWeight="700" textAnchor="middle">
        <text x="948" y="836" fontSize="19">BAS</text>
        <text x="947" y="973" fontSize="19">HAUT</text>
        <text x="1307" y="908" fontSize="19">G</text>
        <text x="1310" y="980" fontSize="19">G</text>
      </g>
      <g fontSize="12">
        <text x="991" y="824">PASSAGER ET</text>
        <text x="991" y="837">CHAUFFEUR</text>
        <text x="1121" y="797">PASSAGER ET</text>
        <text x="1121" y="809">CHAUFFEUR</text>
        <text x="1568" y="818">PASSAGER ET #209</text>
        <text x="1568" y="831">COTÉ CHAUFFEUR</text>
      </g>
      <Balloon x={1090} y={826} text="213" />
      <Balloon x={1225} y={804} text="213" />
      <Balloon x={1550} y={833} text="208" />
      <path d="M1104 826.500h19l10 44M1239 804.500h19l-28 68M1564 833.500h19l6 33" fill="none" stroke="#000" />
      <path d="M1130 863l7-1-1 12zM1230 866l5 2-5 6zM1586 861l7 0-2 10z" />

      <g fill="none" stroke="#000">
        <path d="M1018 857h716M1018 939h716M1137 936h85M1591 936h85" strokeWidth="4" />
        <path d="M1019 857v82M1733 857v82M1486 857v80M1076 940v25M1145 940v25M1681 940v25" strokeWidth="2" />
        <path d="M1135 858v76M1229 858v77M1681 858v77M1590 858v32l-4 12v33" strokeWidth="3" />
        <path d="M1139 862v44M1147 860v48M1137 907h12M1137 917h2v18M1223 920h5v32h-5zM1587 920h4v32h-4zM1676 935v-17h3" strokeWidth="2" />
        <path d="M1139 868l6-7M1139 882l8-8" />
        <path d="M1069 941h15M1069 965h14M1138 941h16M1138 965h16M1210 941h12M1210 965h9q3 0 3-4V940M1592 940v21q0 4 4 4h9M1593 941h12M1673 941h15M1673 965h15" strokeWidth="3" />
        <path d="M1266 941l8 8M1548 941l-7 8M1274 948.500h267M1274 951.500h267v-3" strokeWidth="1.500" />
        <path d="M1310 942l2 2-2 2-2-2zM1504 942l2 2-2 2-2-2z" />
        <path d="M1228.500 957v20M1266.500 946v30" stroke="#888" />
        <path d="M1322 908h21.500v70" strokeWidth="3" />
        <path d="M1448 953l-6 22M1466 953l11 22M1508 973q6-3 12 0" />
      </g>
      <path d="M1322 908l14-3v6zM1448 953l-4 8 4 1zM1466 953l1 9 4-2z" />
      <g>
        <circle cx="1479" cy="898" r="2" /><circle cx="1493" cy="898" r="2" />
        <circle cx="1598" cy="869" r="1.800" /><circle cx="1598" cy="882" r="1.800" />
        <circle cx="1662" cy="869" r="1.800" /><circle cx="1662" cy="882" r="1.800" />
      </g>
      <Ear x={1277} />
      <Ear x={1338} />
      <Tri x={1308} />
      <Tri x={1366} down />
      <Tri x={1424} />
    </g>
  </Scene>
)

/* ---------- bottom ---------- */

const SheetTabs = styled.div`
  display: flex;
  flex: none;
  width: 919px;
  height: 15px;
  padding-left: 1px;
  background: #494949;
`

const NavButton = styled.button`
  width: 16px;
  border-right: 1px solid #c2c2c2;
  background: #a5a5a5;
  color: #777;
  display: grid;
  place-items: center;
`

const SheetTab = styled.button`
  display: flex;
  align-items: center;
  justify-content: center;
  gap: 4px;
  width: ${p => p.$w || 75}px;
  overflow: hidden;
  border-right: 1px solid #858585;
  background: ${p => (p.$active ? '#494949' : '#2c2c2c')};
  font-weight: ${p => (p.$active ? 700 : 400)};
`

const LayerBar = styled.div`
  display: flex;
  align-items: center;
  flex: none;
  height: 33px;
  padding-left: 3px;
  ${Grip} { height: 26px; }
`

const SelectBox = styled.div`
  display: grid;
  align-items: center;
  width: 98px;
  height: 25px;
  margin: 0 2px 0 10px;
  border: 1px solid #8a8a8a;
  background: #e2e2e2;
  > * { grid-area: 1 / 1; }
  svg { justify-self: end; margin-right: 4px; pointer-events: none; }
`

const LayerSelect = styled.select`
  width: 100%;
  height: 100%;
  padding-left: 4px;
  border: 0;
  border-radius: 0;
  appearance: none;
  background: none;
  color: #000;
  font-size: 12px;
`

const Divider = styled.span`
  width: 1px;
  height: ${p => p.$h || 31}px;
  margin: 0 4px 0 ${p => p.$m || 0}px;
  background: ${p => p.$color || '#858585'};
`

const ModeButton = styled(IconButton)`
  border: 1px solid #000;
  background: #2c2c2c;
`

const StatusBar = styled.footer`
  display: flex;
  align-items: center;
  flex: none;
  height: 19px;
  padding: 0 2px 0 1px;
  border-top: 1px solid #858585;
  background: #949494;
  color: #f2f2f2;
  b { flex: 1; font-weight: 400; }
`

const StatusItem = styled.span`
  display: flex;
  align-items: center;
  justify-content: ${p => (p.$end ? 'flex-end' : 'center')};
  gap: ${p => p.$gap || 0}px;
  width: ${p => p.$w}px;
  padding-right: ${p => p.$end || 0}px;
`

const treeRows = [
  [0, 'drawing', 'HN536B-E-002'],
  [1, 'annotations', 'Annotations', 'leaf'],
  [1, 'bom', 'Nomenclature1', 'leaf'],
  [1, 'sheetDim', 'Feuille1'],
  [2, 'sheetDim', 'Fond de plan'],
  [2, 'viewDim', 'Vue de mise en plan1'],
  [2, 'viewDim', 'Vue de mise en plan2'],
  [2, 'sectionDim', 'Vue en coupe D-D'],
  [2, 'detail', 'Vue de détail J (1 : 18)'],
  [2, 'sectionDim', 'Vue en coupe F-F'],
  [1, 'sheetDim', 'Feuille2'],
  [2, 'sheetDim', 'Fond de plan2'],
  [2, 'viewDim', 'Vue de mise en plan2'],
  [2, 'sectionDim', 'Vue en coupe B-B'],
  [1, 'sheet', 'Feuille3'],
  [2, 'sheet', 'Fond de plan1'],
  [2, 'view', 'Vue de mise en plan5'],
  [2, 'view', 'Vue de mise en plan7'],
  [2, 'section', 'Vue en coupe E-E'],
  [2, 'section', 'Vue en coupe G-G'],
]

const quickTools = [
  ['home'], ['doc', 1], ['open', 1], ['save', 1], ['print', 1], ['undo', 1], ['cursor', 1],
  ['traffic'], ['options'], ['gear', 1], ['shield'], ['check'], ['pencil'], ['note'], ['tasks'],
]

const leftTools = ['blockNew', 'blockEdit', 'blockInsert', 'blockAdd', 'blockTraffic', 'blockSave', 'blockFrame', 'belt']
const taskIcons = ['home', 'library', 'folder', 'drawing', 'ball', 'options', 'forum', 'search3d']
const tabs = ['Disposition des vues', 'Annotation', 'Esquisse', 'Compléments de SOLIDWORKS', 'CUSTOMTOOLS']

const Header = () => (
  <>
    <TitleBar>
      <Logo>
        <svg width="29" height="30" viewBox="0 0 29 30" fill="none" stroke="#da291c" strokeWidth="2.200" aria-hidden="true">
          <path d="M9 3c4-1 9-2 10 0s-4 5-9 7c5-1 7 1 4 5-3 5-8 10-14 12l7-14" />
          <path d="M28 12c-5-1-10 1-9 4s6 3 4 7c-2 3-6 3-10 3" />
        </svg>
        <span><strong>SOLID</strong>WORKS</span>
      </Logo>
      <MenuBar>
        {['Fichier', 'Edition', 'Affichage', 'Insertion', 'Outils', 'Fenêtre', '?'].map(m => <a key={m} href="#menu">{m}</a>)}
        <IconButton $w={28} aria-label="Épingler"><Icon name="pin" size={16} /></IconButton>
      </MenuBar>
      <QuickBar>
        {quickTools.map(([name, menu]) => (
          <ToolPair key={name} $active={name === 'cursor'}>
            <IconButton aria-label={name}><Icon name={name} /></IconButton>
            {menu && <IconButton $w={13} aria-label={name + ' menu'}><Caret $color={name === 'undo' ? '#8c8c8c' : null} /></IconButton>}
          </ToolPair>
        ))}
      </QuickBar>
      <DocTitle>HN536B-E-002 - Feuille3 *</DocTitle>
      <SearchBox>
        <Icon name="prompt" size={16} />
        <input placeholder="Rechercher des commandes" aria-label="Rechercher des commandes" />
        <Icon name="magnifier" size={18} />
        <Caret $color="#222" />
      </SearchBox>
      <WindowButtons>
        <IconButton aria-label="Connexion"><Icon name="user" /></IconButton>
        <IconButton aria-label="Aide"><Icon name="help" size={18} /></IconButton>
        <IconButton $w={13} aria-label="Menu aide"><Caret /></IconButton>
        <IconButton aria-label="Réduire"><Icon name="minimize" /></IconButton>
        <IconButton aria-label="Étendre"><Icon name="span" /></IconButton>
        <IconButton aria-label="Restaurer"><Icon name="restore" /></IconButton>
        <IconButton aria-label="Fermer"><Icon name="close" size={18} /></IconButton>
      </WindowButtons>
    </TitleBar>
    <SecondBar>
      <Grip />
      <ToolsButton aria-label="Outils"><Icon name="wrench" /></ToolsButton>
    </SecondBar>
  </>
)

const RibbonBar = () => (
  <>
    <Ribbon>
      <Group>
        <BigButton $w={73}><Icon name="dimension" size={22} /><span>Cotation intelligente</span><Caret /></BigButton>
        <BigButton $w={48} $low><Icon name="modelItems" size={22} /><span>Objets du modèle</span></BigButton>
      </Group>
      <Group>
        <BigButton $w={88} $low>
          <IconLabel width="22" height="22" viewBox="0 0 22 22">
            <text x="2" y="9" fill="#ddd">Abc</text>
            <g transform="translate(3 4) scale(.9)">{glyphs.spelling}</g>
          </IconLabel>
          <span>Vérificateur d'orthographe</span>
        </BigButton>
        <BigButton $w={68} $low><Icon name="format" size={22} /><span>Reproduire le format</span></BigButton>
      </Group>
      <BigButton $w={37} $low><Icon name="bigA" size={22} /><span>Note</span></BigButton>
      <BigButton $w={103}>
        <IconLabel width="22" height="22" viewBox="0 0 22 22" fill="#c0c0c0">
          <text x="1" y="10">AAA</text>
          <text x="1" y="19"><tspan fill="#56acd6">A</tspan>AA</text>
        </IconLabel>
        <span>Répétition linéaire de notes</span>
        <Caret />
      </BigButton>
      <Group>{smallColumns1.map(c => <SmallColumn key={c.w + c.items[0][0]} {...c} />)}</Group>
      <Group><SmallColumn w={158} items={[['tolerance', 'Tolérance géométrique'], ['datum', 'Elément de référence']]} /></Group>
      <Group><BigButton $w={38}><Icon name="block" size={22} /><span>Blocs</span><Caret /></BigButton></Group>
      <Group>
        <SmallColumn w={158} items={[['centerMark', 'Axe de centrage'], ['centerLine', 'Ligne de construction'], ['hatch', 'Zone hachurée/Remplir']]} />
        <SmallColumn w={142} items={[['revSymbol', 'Symbole de révision', true], ['revCloud', 'Nuage de révision']]} />
      </Group>
      <BigButton $w={44}><Icon name="table" size={22} /><span>Tables</span><Caret /></BigButton>
    </Ribbon>
    <TabRow>
      {tabs.map(t => <Tab key={t} $active={t === 'Annotation'}>{t}</Tab>)}
      <BackSheet />
    </TabRow>
  </>
)

const FeatureTree = () => (
  <TreePanel>
    <PanelHandle><Knob /></PanelHandle>
    <PanelTabs>
      <IconButton $w={41} $h={23} aria-label="Arbre"><Icon name="drawing" /></IconButton>
      <IconButton $w={41} $h={23} aria-label="Propriétés"><Icon name="options" /></IconButton>
      <IconButton $w={20} $h={23} aria-label="Plus">
        <svg width="10" height="12" viewBox="0 0 10 12"><path d="M1 1l4 5-4 5M4 1l4 5-4 5" fill="none" stroke="#aaa" /></svg>
      </IconButton>
    </PanelTabs>
    <FilterBox><Icon name="funnel" size={18} /><input aria-label="Filtrer" /></FilterBox>
    <TreeList>
      {treeRows.map(([depth, icon, text, leaf], i) => (
        <TreeRow key={i} $depth={depth}>
          {depth > 0 && <Twisty $closed={depth > 1} aria-label={text}>{!leaf && <Caret />}</Twisty>}
          <Icon name={icon} size={19} />
          {text}
        </TreeRow>
      ))}
    </TreeList>
    <HScroll>
      <button aria-label="Défiler à gauche"><Arrow d="M6 1L3 4.500 6 8" /></button>
      <Thumb $m="0 5px 0 0" />
      <button aria-label="Défiler à droite"><Arrow d="M3 1l3 3.500L3 8" /></button>
    </HScroll>
  </TreePanel>
)

const App = () => (
  <Page>
    <GlobalStyle />
    <Header />
    <RibbonBar />
    <WorkArea>
      <LeftTools>
        <Grip $wide />
        {leftTools.map((name, i) => <IconButton key={i} aria-label={name}><Icon name={name} /></IconButton>)}
        <Rule />
      </LeftTools>
      <FrameStrip />
      <DocColumn>
        <DocRow $grow>
          <FeatureTree />
          <Viewport>
            <Drawing />
            <PartsList />
            <ViewTools>
              {['zoomFit', 'zoomSheet', 'zoomArea', 'previous', 'rotate', 'rotate3d', 'cube'].map(n => (
                <IconButton key={n} aria-label={n}><Icon name={n} /></IconButton>
              ))}
              <Caret $color="#999" />
              <EyePair>
                <IconButton $h={24} aria-label="Affichage"><Icon name="eye" size={18} /></IconButton>
                <IconButton $w={13} $h={24} aria-label="Menu affichage"><Caret $color="#777" /></IconButton>
              </EyePair>
              <IconButton aria-label="Scène"><Icon name="sphere" size={18} /></IconButton>
            </ViewTools>
            <MdiButtons>
              {['mdiLeft', 'mdiRight', 'mdiMin', 'mdiRestore', 'mdiClose'].map(n => (
                <IconButton key={n} aria-label={n}><Icon name={n} /></IconButton>
              ))}
            </MdiButtons>
            <PanelSplit aria-label="Replier le panneau"><Knob /></PanelSplit>
          </Viewport>
          <VScroll><button aria-label="Défiler en bas"><Arrow d="M1 3l3.500 3L8 3" /></button></VScroll>
        </DocRow>
        <DocRow>
          <SheetTabs>
            {['M3 1v7M8 1L5 4.500 8 8z', 'M6 1L3 4.500 6 8z', 'M3 1l3 3.500L3 8z', 'M7 1v7M2 1l3 3.500L2 8z'].map(d => (
              <NavButton key={d} aria-label="Feuille"><svg width="9" height="9"><path d={d} fill="#777" stroke="#777" /></svg></NavButton>
            ))}
            <SheetTab $w={81}><Icon name="page" size={15} />Feuille1</SheetTab>
            <SheetTab><Icon name="page" size={15} />Feuille2</SheetTab>
            <SheetTab $active><Icon name="page" size={15} />Feuille3</SheetTab>
            <SheetTab $w={37} aria-label="Ajouter une feuille"><Icon name="newPage" size={15} /></SheetTab>
          </SheetTabs>
          <HScroll $fill>
            <button aria-label="Défiler à gauche"><Arrow d="M6 1L3 4.500 6 8" /></button>
            <Thumb $m="0 0 0 104px" />
            <button aria-label="Défiler à droite"><Arrow d="M3 1l3 3.500L3 8" /></button>
          </HScroll>
          <Corner />
        </DocRow>
      </DocColumn>
      <TaskTabs>
        {taskIcons.map(n => <IconButton key={n} aria-label={n}><Icon name={n} size={18} /></IconButton>)}
      </TaskTabs>
    </WorkArea>
    <LayerBar>
      <Grip />
      <SelectBox>
        <LayerSelect aria-label="Calque"><option>-Aucun-</option></LayerSelect>
        <svg width="10" height="8" viewBox="0 0 10 8"><path d="M1 2l4 4 4-4" fill="none" stroke="#444" /></svg>
      </SelectBox>
      <IconButton $w={24} aria-label="Calques"><Icon name="layers" size={17} /></IconButton>
      <Divider $m={6} />
      <Grip />
      <Divider $m={3} $color="transparent" />
      {['layerEdit', 'layers', 'brush', 'lineWidth', 'lineStyle', 'hideShow'].map(n => (
        <IconButton key={n} $w={27} aria-label={n}><Icon name={n} size={n === 'layers' ? 17 : 20} /></IconButton>
      ))}
      <ModeButton $w={27} aria-label="Mode couleur"><Icon name="colorMode" /></ModeButton>
      <Divider $m={7} />
    </LayerBar>
    <StatusBar>
      <b>SOLIDWORKS 2019 SP5.0</b>
      <StatusItem $w={96} $end={4}>Sous-contrainte</StatusItem>
      <Divider $h={15} $m={0} $color="#dcdcdc" />
      <Divider $h={15} $m={3} $color="#dcdcdc" />
      <StatusItem $w={87}>Edition: Feuille3</StatusItem>
      <Divider $h={15} $m={1} $color="#dcdcdc" />
      <StatusItem $w={138} $gap={42} $end={20}>1 : 18<Caret $up /></StatusItem>
      <Divider $h={15} $m={0} $color="#dcdcdc" />
      <StatusItem $w={194} $gap={20} $end={72}>Personnalisé<Caret $up /></StatusItem>
      <Icon name="tag" size={17} />
    </StatusBar>
  </Page>
)

export default App
